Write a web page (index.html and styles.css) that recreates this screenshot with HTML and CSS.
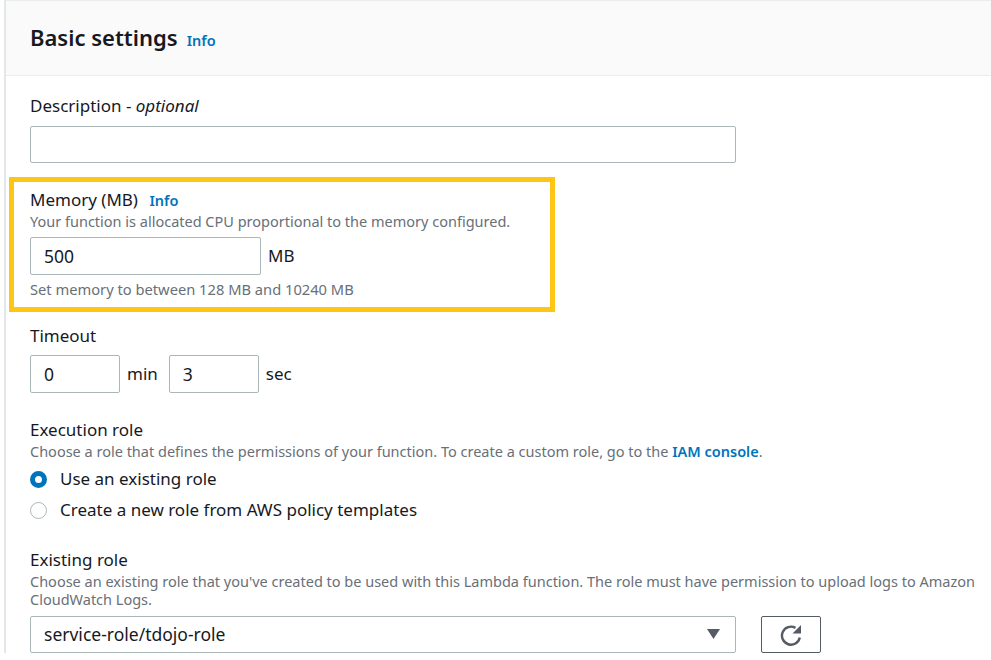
FILE: index.html
```html
<!doctype html>
<html>
    <head>
        <meta charset="utf-8">
        <title>Basic settings</title>
        <link rel="stylesheet" href="styles.css">
    </head>
    <body>
        <div class="card">
            <div class="card-header">
                <h2>Basic settings</h2>
                <a class="info info-large">Info</a>
            </div>
            <div class="card-body">
                <div class="field field-description">
                    <div class="label">Description - <i>optional</i></div>
                    <div class="input input-wide"></div>
                </div>

                <!-- yellow callout round the memory field -->
                <div class="highlight">
                    <div class="label">Memory (MB) <a class="info">Info</a></div>
                    <div class="desc">Your function is allocated CPU proportional to the memory configured.</div>
                    <div class="input-row">
                        <div class="input input-memory">500</div>
                        <span>MB</span>
                    </div>
                    <div class="desc hint">Set memory to between 128 MB and 10240 MB</div>
                </div>

                <div class="field field-timeout">
                    <div class="label">Timeout</div>
                    <div class="input-row">
                        <div class="input input-time">0</div>
                        <span>min</span>
                        <div class="input input-time">3</div>
                        <span>sec</span>
                    </div>
                </div>

                <div class="field field-role">
                    <div class="label">Execution role</div>
                    <div class="desc">Choose a role that defines the permissions of your function. To create a custom role, go to the <a class="link">IAM console</a>.</div>
                    <div class="radio-row radio-first">
                        <span class="radio radio-checked"></span>
                        <span>Use an existing role</span>
                    </div>
                    <div class="radio-row">
                        <span class="radio"></span>
                        <span>Create a new role from AWS policy templates</span>
                    </div>
                </div>

                <div class="field field-existing">
                    <div class="label">Existing role</div>
                    <div class="desc desc-wrap">Choose an existing role that you've created to be used with this Lambda function. The role must have permission to upload logs to Amazon CloudWatch Logs.</div>
                    <div class="select-row">
                        <div class="input input-wide select">
                            <span>service-role/tdojo-role</span>
                            <svg class="caret" width="13" height="10" viewBox="0 0 13 10"><path d="M0 0h13L6.5 10z"/></svg>
                        </div>
                        <div class="refresh">
                            <svg width="22" height="22" viewBox="0 0 22 22" fill="none"><path d="M19.8 13.5A9 9 0 1 1 15.5 3.9" stroke="#545b64" stroke-width="2.4"/><path d="M21 1V9.5H12.5z" fill="#545b64"/></svg>
                        </div>
                    </div>
                </div>
            </div>
        </div>
    </body>
</html>
```

FILE: styles.css
```css
body {
    margin: 0;
    height: 660px;
    overflow: hidden;
    background: #fff;
    color: #16191f;
    font-family: "Noto Sans", "Open Sans", sans-serif;
    font-size: 17px;
    line-height: 20px;
}
.card {
    margin-left: 4px;
    border-left: 2px solid #e4e7e7;
    border-top: 1px solid #eaeded;
}
.card-header {
    display: flex;
    align-items: center;
    gap: 9px;
    box-sizing: border-box;
    height: 75px;
    padding: 0 0 3px 24px;
    background: #fafafa;
    border-bottom: 1px solid #eaeded;
}
.card-header h2 {
    margin: 0;
    font-size: 22px;
    font-weight: 600;
}
.card-body { padding: 20px 0 0 24px; }
.info {
    color: #0073bb;
    font-size: 14.5px;
    font-weight: 600;
}
.info-large { margin-top: 7px; }
.label .info { margin-left: 7px; }
.link {
    color: #0073bb;
    font-weight: 600;
}
.desc {
    color: #687078;
    font-size: 14.5px;
    line-height: 18px;
}
.input {
    box-sizing: border-box;
    height: 38px;
    padding: 0 13px;
    display: flex;
    align-items: center;
    border: 1px solid #aab7b8;
    border-radius: 2px;
    background: #fff;
    font-size: 17.5px;
}
.input-wide { width: 706px; height: 37px; }
.input-memory { width: 231px; }
.input-time { width: 90px; }
.input-row {
    display: flex;
    align-items: center;
    gap: 7px;
}
.field-description .input { margin-top: 10px; }
.highlight {
    box-sizing: border-box;
    width: 546px;
    height: 135px;
    margin: 14px 0 0 -21px;
    padding: 8px 0 0 16px;
    border: 5px solid #fec514;
}
.highlight .desc { margin-top: 2px; }
.highlight .input-row { margin-top: 7px; }
.highlight .hint { margin-top: 5px; font-size: 14.7px; }
.field-timeout { margin-top: 14px; }
.field-timeout .input-row { margin-top: 9px; }
.field-timeout .input-time:nth-child(3) { margin-left: 4px; }
.field-role { margin-top: 27px; }
.field-role .desc { margin-top: 2px; }
.radio-row {
    display: flex;
    align-items: center;
    gap: 13px;
    height: 20px;
    margin-top: 11px;
}
.radio-first { margin-top: 9px; }
.radio {
    box-sizing: border-box;
    width: 17px;
    height: 17px;
    border: 1.5px solid #aab7b8;
    border-radius: 50%;
    background: #fff;
}
.radio-checked { border: 5.5px solid #0073bb; }
.field-existing { margin-top: 30px; }
.desc-wrap { width: 950px; margin-top: 2px; }
.select-row {
    display: flex;
    gap: 25px;
    margin-top: 8px;
}
.select {
    justify-content: space-between;
    padding-bottom: 1px;
}
.caret { fill: #545b64; margin-right: 2px; }
.refresh {
    box-sizing: border-box;
    width: 60px;
    height: 37px;
    display: flex;
    align-items: center;
    justify-content: center;
    border: 1px solid #545b64;
    border-radius: 2px;
}
```
